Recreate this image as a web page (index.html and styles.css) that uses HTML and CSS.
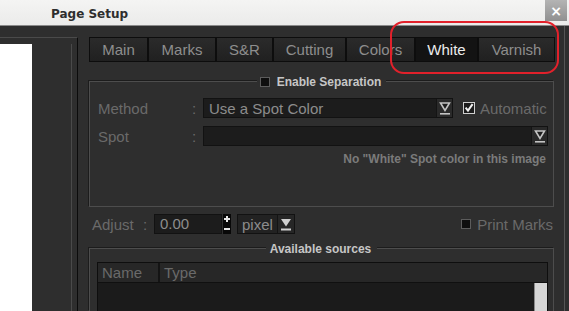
FILE: index.html
```html
<!DOCTYPE html>
<html>
<head>
<meta charset="utf-8">
<link rel="stylesheet" href="styles.css">
</head>
<body>
<div class="titlebar">
  <span class="title">Page Setup</span>
  <span class="close">×</span>
</div>
<div class="main">
  <div class="side">
    <div class="side-frame">
      <div class="preview"></div>
      <div class="side-gap"></div>
      <div class="side-line"></div>
    </div>
  </div>
  <div class="content">
    <div class="tabs">
      <div class="tab w-main">Main</div>
      <div class="tab w-marks">Marks</div>
      <div class="tab w-sr">S&amp;R</div>
      <div class="tab w-cut">Cutting</div>
      <div class="tab w-colors">Colors</div>
      <div class="tab w-white active">White</div>
      <div class="tab w-varnish">Varnish</div>
    </div>

    <div class="group sep">
      <div class="legend">
        <span class="check"></span>
        <span>Enable Separation</span>
      </div>
      <div class="row first">
        <span class="label">Method</span>
        <span class="colon">:</span>
        <div class="combo method">
          <span class="combo-text">Use a Spot Color</span>
          <span class="combo-btn">
            <svg width="12" height="14" viewBox="0 0 12 14"><polygon points="1.5,2 10.5,2 6,9.5" fill="#1e1e1e" stroke="#c4c4c4" stroke-width="1.6" stroke-linejoin="miter"/><rect x="1" y="12" width="10" height="1.6" fill="#c4c4c4"/></svg>
          </span>
        </div>
        <span class="auto">
          <svg width="12" height="12" viewBox="0 0 12 12"><rect x="0.5" y="0.5" width="11" height="11" fill="#1c1c1c" stroke="#cfcfcf"/><path d="M2.6 5.6 L5 8.6 L9.6 2.2" fill="none" stroke="#f0f0f0" stroke-width="2"/></svg>
          <span class="auto-text">Automatic</span>
        </span>
      </div>
      <div class="row second">
        <span class="label">Spot</span>
        <span class="colon">:</span>
        <div class="combo spot">
          <span class="combo-text"></span>
          <span class="combo-btn">
            <svg width="12" height="14" viewBox="0 0 12 14"><polygon points="1.5,2 10.5,2 6,9.5" fill="#1e1e1e" stroke="#c4c4c4" stroke-width="1.6"/><rect x="1" y="12" width="10" height="1.6" fill="#c4c4c4"/></svg>
          </span>
        </div>
      </div>
      <div class="note">No "White" Spot color in this image</div>
    </div>

    <div class="adjust-row">
      <span class="adj-label">Adjust</span>
      <span class="adj-colon">:</span>
      <div class="spin-input">0.00</div>
      <div class="spin-btns">
        <svg width="8" height="20" viewBox="0 0 8 20"><rect x="1" y="4" width="6" height="2" fill="#e6e6e6"/><rect x="3" y="2" width="2" height="6" fill="#e6e6e6"/><rect x="1" y="14" width="6" height="2" fill="#e6e6e6"/></svg>
      </div>
      <div class="unit">
        <span class="unit-text">pixel</span>
        <span class="unit-btn">
          <svg width="12" height="14" viewBox="0 0 12 14"><polygon points="1,2 11,2 6,9.5" fill="#cfcfcf"/><rect x="1" y="11.5" width="10" height="2" fill="#cfcfcf"/></svg>
        </span>
      </div>
      <span class="print">
        <span class="check"></span>
        <span class="print-text">Print Marks</span>
      </span>
    </div>

    <div class="group sources">
      <div class="legend">Available sources</div>
      <div class="table">
        <div class="thead">
          <div class="th name">Name</div>
          <div class="th type">Type</div>
        </div>
        <div class="tbody">
          <div class="scroll"></div>
        </div>
      </div>
    </div>
  </div>
</div>
<div class="highlight"></div>
</body>
</html>
```
FILE: styles.css
```css
html, body {
  margin: 0;
  padding: 0;
}
body {
  width: 569px;
  height: 311px;
  overflow: hidden;
  position: relative;
  background: #2e2e2e;
  font-family: "Liberation Sans", Arial, sans-serif;
}

.titlebar {
  height: 26px;
  box-sizing: border-box;
  border-bottom: 1px solid #8a8a8a;
  background: linear-gradient(#f4f4f3, #ebebea);
  display: flex;
  align-items: center;
}
.title {
  margin-left: 51px;
  font: bold 12px "DejaVu Sans", sans-serif;
  color: #2e2e2e;
  margin-top: 2px;
}
.close {
  margin-left: auto;
  margin-right: 2px;
  align-self: flex-start;
  width: 22px;
  height: 21px;
  background: linear-gradient(#b4b4b4, #909090);
  color: #fff;
  font: bold 14px "DejaVu Sans", sans-serif;
  display: flex;
  align-items: center;
  justify-content: center;
}

.main {
  display: flex;
  height: 285px;
  overflow: hidden;
}

.side {
  width: 89px;
  flex: none;
  padding-top: 11px;
  box-sizing: border-box;
}
.side-frame {
  width: 78px;
  height: 100%;
  box-sizing: border-box;
  border-top: 1px solid #4a4a4a;
  border-right: 1px solid #0b0b0b;
  display: flex;
  padding-top: 6px;
}
.preview {
  width: 32px;
  background: #ffffff;
}
.side-gap {
  width: 39px;
}
.side-line {
  width: 1px;
  background: #4a4a4a;
}

.content {
  width: 476px;
  flex: none;
  box-sizing: border-box;
  border-right: 1px solid #555;
  padding-top: 11px;
}

.tabs {
  display: flex;
  height: 25px;
}
.tab {
  box-sizing: border-box;
  height: 25px;
  border: 1px solid #0d0d0d;
  background: linear-gradient(#2b2b2b, #202020);
  color: #8e8e8e;
  font-size: 15px;
  display: flex;
  align-items: center;
  justify-content: center;
}
.tab.active {
  background: #131313;
  color: #ececec;
}
.w-main { width: 59px; }
.w-marks { width: 68px; }
.w-sr { width: 57px; }
.w-cut { width: 73px; }
.w-colors { width: 69px; }
.w-white { width: 63px; }
.w-varnish { width: 77px; }

.group {
  width: 465px;
  box-sizing: border-box;
  border: 1px solid #4d4d4d;
  box-shadow: -1px -1px 0 #1c1c1c;
  display: flex;
  flex-direction: column;
}
.legend {
  align-self: center;
  margin-top: -8px;
  height: 15px;
  background: #2e2e2e;
  display: flex;
  align-items: center;
  gap: 7px;
  font-weight: bold;
  font-size: 12px;
  color: #c6c6c6;
}
.sep {
  margin-top: 19px;
  height: 126px;
}
.sep .legend {
  padding: 0 5px 0 3px;
}
.check {
  width: 10px;
  height: 10px;
  box-sizing: border-box;
  background: #0e0e0e;
  border: 1px solid #5c5c5c;
  flex: none;
}

.row {
  display: flex;
  align-items: center;
  height: 20px;
  padding-left: 8px;
}
.row.first { margin-top: 9px; }
.row.second { margin-top: 8px; }
.label {
  width: 94px;
  font-size: 15px;
  color: #6a6a6a;
}
.colon {
  width: 11px;
  font-size: 15px;
  color: #6a6a6a;
}
.combo {
  height: 20px;
  box-sizing: border-box;
  background: #1c1c1c;
  border: 1px solid #121212;
  display: flex;
  align-items: center;
}
.combo.method { width: 250px; }
.combo.spot { width: 345px; }
.combo-text {
  flex: 1;
  padding-left: 5px;
  font-size: 15px;
  color: #8c8c8c;
}
.combo-btn {
  width: 15px;
  height: 18px;
  background: #2a2a2a;
  border-left: 1px solid #141414;
  display: flex;
  align-items: center;
  justify-content: center;
}
.auto {
  margin-left: 10px;
  display: flex;
  align-items: center;
  gap: 5px;
}
.auto-text {
  font-size: 15px;
  color: #6a6a6a;
}
.note {
  margin-top: 6px;
  align-self: flex-end;
  margin-right: 7px;
  font-weight: bold;
  font-size: 12px;
  color: #7b7b7b;
  line-height: 14px;
}

.adjust-row {
  margin-top: 7px;
  height: 20px;
  display: flex;
  align-items: center;
  padding-left: 3px;
}
.adj-label {
  font-size: 15px;
  color: #6a6a6a;
  width: 51px;
}
.adj-colon {
  font-size: 15px;
  color: #6a6a6a;
  width: 11px;
}
.spin-input {
  width: 68px;
  height: 20px;
  box-sizing: border-box;
  background: #1c1c1c;
  border: 1px solid #121212;
  font-size: 15px;
  color: #8c8c8c;
  padding-left: 5px;
  line-height: 18px;
}
.spin-btns {
  margin-left: 1px;
  width: 8px;
  height: 20px;
  background: #080808;
  display: flex;
}
.unit {
  margin-left: 6px;
  width: 58px;
  height: 20px;
  box-sizing: border-box;
  background: #222;
  border: 1px solid #121212;
  display: flex;
  align-items: center;
}
.unit-text {
  flex: 1;
  padding-left: 4px;
  font-size: 15px;
  color: #8c8c8c;
}
.unit-btn {
  width: 16px;
  height: 18px;
  background: #262626;
  border-left: 1px solid #141414;
  display: flex;
  align-items: center;
  justify-content: center;
}
.print {
  margin-left: auto;
  margin-right: 11px;
  display: flex;
  align-items: center;
  gap: 6px;
}
.print-text {
  font-size: 15px;
  color: #6a6a6a;
}

.sources {
  margin-top: 14px;
  height: 63px;
  border-bottom: none;
}
.sources .legend {
  padding: 0 6px 0 4px;
}
.table {
  margin: 6px 5px 0 7px;
  flex: 1;
  border: 1px solid #0e0e0e;
  border-bottom: none;
  background: #1b1b1b;
  display: flex;
  flex-direction: column;
}
.thead {
  display: flex;
  height: 19px;
  border-bottom: 1px solid #101010;
  background: #272727;
}
.th {
  box-sizing: border-box;
  font-size: 15px;
  color: #6a6a6a;
  padding-left: 4px;
  line-height: 19px;
}
.th.name {
  width: 62px;
  border-right: 2px solid #141414;
}
.th.type {
  flex: 1;
}
.tbody {
  flex: 1;
  display: flex;
  justify-content: flex-end;
}
.scroll {
  width: 12px;
  background: #d6d6d6;
  border-left: 1px solid #8a8a8a;
}

.highlight {
  position: absolute;
  left: 390px;
  top: 21px;
  width: 169px;
  height: 53px;
  box-sizing: border-box;
  border: 2px solid #e2212b;
  border-radius: 14px;
}
```
